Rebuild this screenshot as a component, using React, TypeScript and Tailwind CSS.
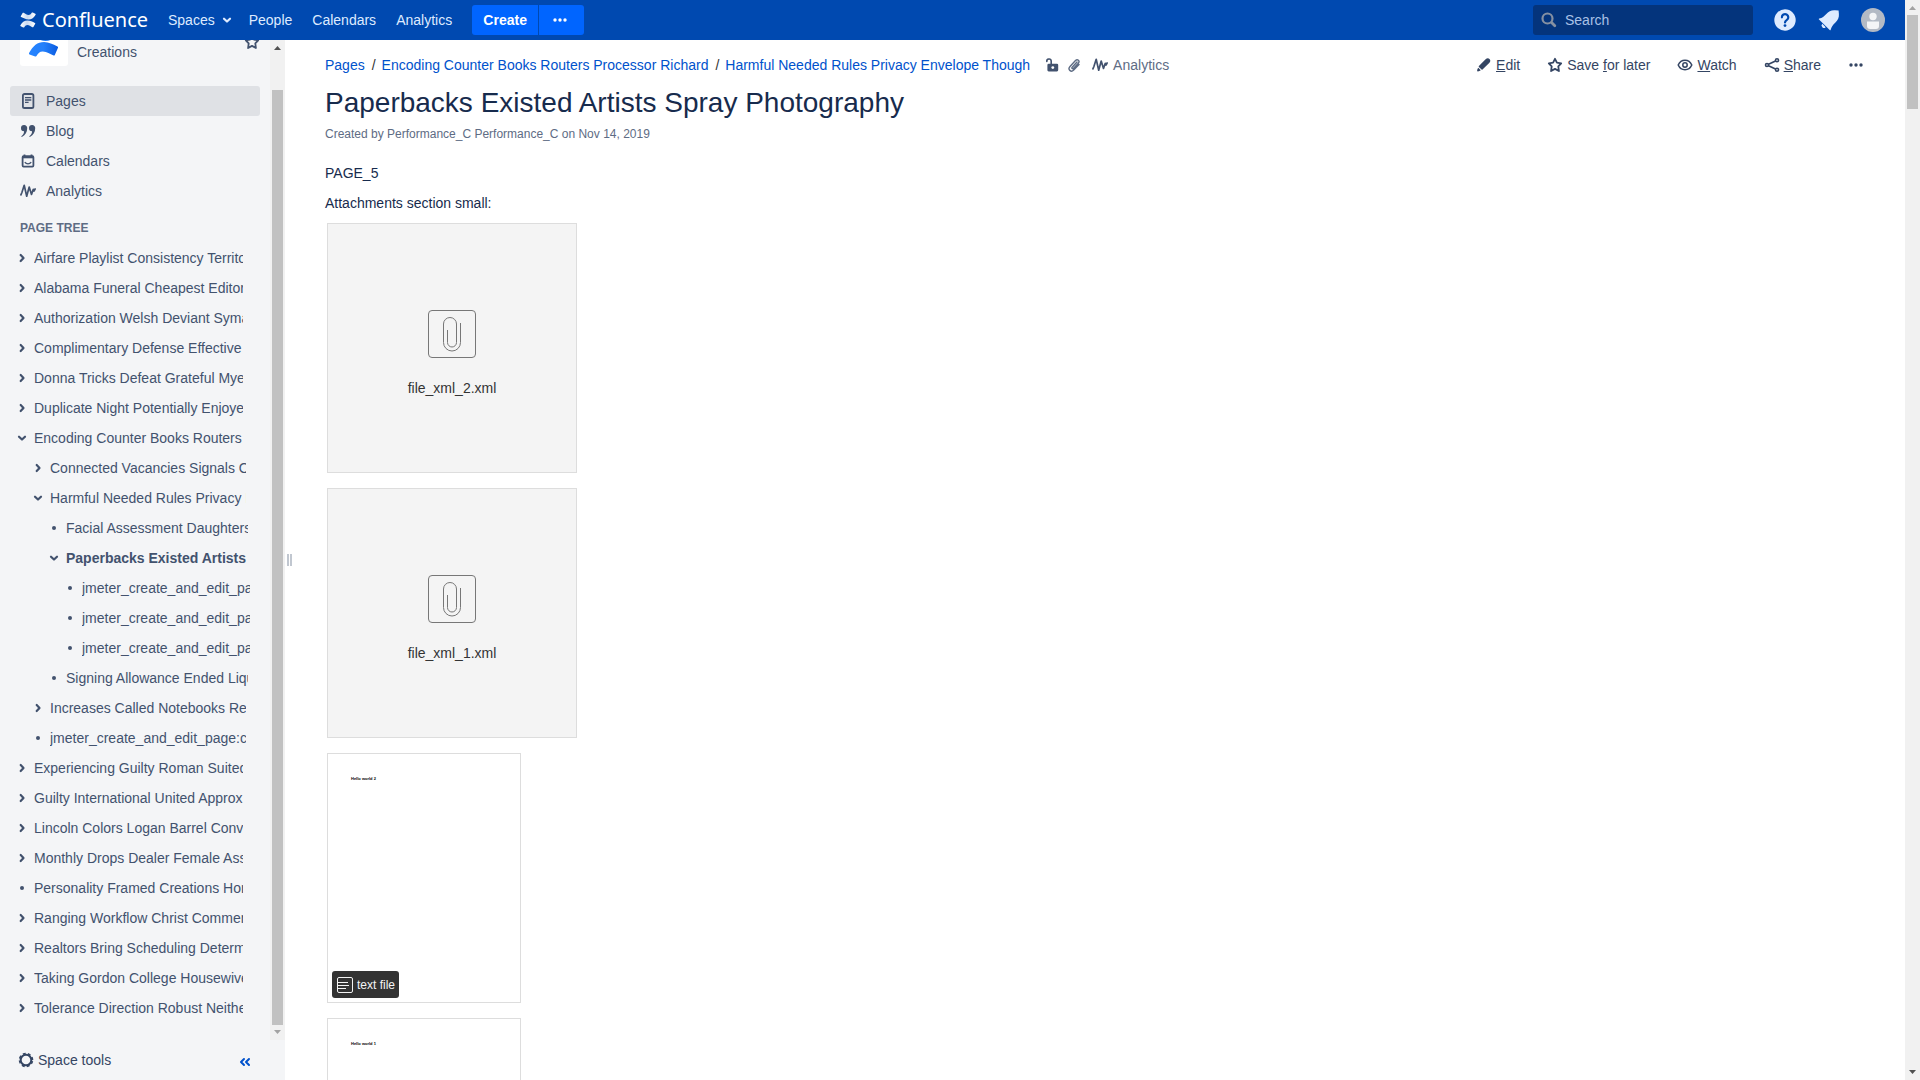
import React from "react";

type Kind = "closed" | "open" | "leaf";
type Node = { title: string; level: number; kind: Kind; current?: boolean };

const tree: Node[] = [
  { title: "Airfare Playlist Consistency Territory", level: 0, kind: "closed" },
  { title: "Alabama Funeral Cheapest Editorial", level: 0, kind: "closed" },
  { title: "Authorization Welsh Deviant Symantec", level: 0, kind: "closed" },
  { title: "Complimentary Defense Effective", level: 0, kind: "closed" },
  { title: "Donna Tricks Defeat Grateful Myers", level: 0, kind: "closed" },
  { title: "Duplicate Night Potentially Enjoyed", level: 0, kind: "closed" },
  { title: "Encoding Counter Books Routers Processor Richard", level: 0, kind: "open" },
  { title: "Connected Vacancies Signals Of", level: 1, kind: "closed" },
  { title: "Harmful Needed Rules Privacy Envelope Though", level: 1, kind: "open" },
  { title: "Facial Assessment Daughters", level: 2, kind: "leaf" },
  { title: "Paperbacks Existed Artists Spray Photography", level: 2, kind: "open", current: true },
  { title: "jmeter_create_and_edit_page:create", level: 3, kind: "leaf" },
  { title: "jmeter_create_and_edit_page:create", level: 3, kind: "leaf" },
  { title: "jmeter_create_and_edit_page:create", level: 3, kind: "leaf" },
  { title: "Signing Allowance Ended Liquid", level: 2, kind: "leaf" },
  { title: "Increases Called Notebooks Reg", level: 1, kind: "closed" },
  { title: "jmeter_create_and_edit_page:create", level: 1, kind: "leaf" },
  { title: "Experiencing Guilty Roman Suited", level: 0, kind: "closed" },
  { title: "Guilty International United Approx", level: 0, kind: "closed" },
  { title: "Lincoln Colors Logan Barrel Convert", level: 0, kind: "closed" },
  { title: "Monthly Drops Dealer Female Assets", level: 0, kind: "closed" },
  { title: "Personality Framed Creations Horror", level: 0, kind: "leaf" },
  { title: "Ranging Workflow Christ Comments", level: 0, kind: "closed" },
  { title: "Realtors Bring Scheduling Determine", level: 0, kind: "closed" },
  { title: "Taking Gordon College Housewives", level: 0, kind: "closed" },
  { title: "Tolerance Direction Robust Neither", level: 0, kind: "closed" },
];

const indent = ["pl-4 pr-[27px]", "pl-8 pr-6", "pl-12 pr-[22px]", "pl-16 pr-5"];

const Chevron = ({ className = "" }: { className?: string }) => (
  <svg viewBox="0 0 12 12" className={`size-3 shrink-0 ${className}`} fill="none" stroke="currentColor" strokeWidth="2.2" strokeLinecap="round" strokeLinejoin="round">
    <path d="M3 4.7 6 7.5 9 4.7" />
  </svg>
);

const Marker = ({ kind }: { kind: Kind }) =>
  kind === "leaf" ? (
    <span className="flex size-3 shrink-0 items-center justify-center">
      <span className="size-1 rounded-full bg-current" />
    </span>
  ) : (
    <button type="button" aria-label={kind === "open" ? "Collapse" : "Expand"} className="shrink-0">
      <Chevron className={kind === "open" ? "" : "-rotate-90"} />
    </button>
  );

const Star = ({ className = "" }: { className?: string }) => (
  <svg viewBox="0 0 16 16" className={`size-4 shrink-0 ${className}`} fill="none" stroke="currentColor" strokeWidth="1.8" strokeLinejoin="round">
    <path d="M8 1.8 9.9 5.7 14.2 6.3 11.3 9.3 11.9 14 8 11.9 4.1 14 4.7 9.3 1.8 6.3 6.1 5.7Z" />
  </svg>
);

const Pulse = () => (
  <svg viewBox="0 0 16 16" className="size-4 shrink-0" fill="none" stroke="currentColor" strokeWidth="1.7" strokeLinecap="round" strokeLinejoin="round">
    <path d="M.9 11.8 1.900 9.500 4.200 2.300 6.700 13.200 9.200 4 11.500 11.500 13.300 6.300 14 8 15.100 6" />
  </svg>
);

const PageIcon = () => (
  <svg viewBox="0 0 16 16" className="size-4 shrink-0" fill="none" stroke="currentColor">
    <rect x="2.9" y="1" width="10.5" height="14" rx="1.6" strokeWidth="1.8" />
    <path d="M5 4.6h6.3M5 7h6.3M5 9.4h3.6" strokeWidth="1.3" />
  </svg>
);

const QuoteIcon = () => (
  <svg viewBox="0 0 16 16" className="size-4 shrink-0" fill="currentColor">
    <path d="M4 2a3 3 0 0 1 3.2 3.3c0 3.8-1.8 7-5 8.5-.8.4-1.2-.3-.6-.8 1.6-1.3 2.4-2.8 2.5-4.8A3.1 3.1 0 0 1 1 5a3 3 0 0 1 3-3ZM12 2a3 3 0 0 1 3.2 3.3c0 3.8-1.8 7-5 8.5-.8.4-1.2-.3-.6-.8 1.6-1.3 2.4-2.8 2.5-4.8A3.1 3.1 0 0 1 9 5a3 3 0 0 1 3-3Z" />
  </svg>
);

const CalendarIcon = () => (
  <svg viewBox="0 0 16 16" className="size-4 shrink-0" fill="none" stroke="currentColor" strokeWidth="1.8">
    <rect x="2.6" y="3.2" width="10.8" height="10.4" rx="1" />
    <path d="M2.6 4.3h10.8" strokeWidth="2" />
    <path d="M4.5 1.5v2M11.5 1.5v2" />
    <path d="M4.800 9.200c1.600 2.200 4.800 2.200 6.400 0" strokeWidth="1.3" />
  </svg>
);

const Dots = () => (
  <svg viewBox="0 0 16 16" className="size-4 shrink-0" fill="currentColor">
    <circle cx="3" cy="8" r="1.7" />
    <circle cx="8" cy="8" r="1.7" />
    <circle cx="13" cy="8" r="1.7" />
  </svg>
);

const LogoMark = () => (
  <svg viewBox="0 0 16 16" className="size-4 shrink-0">
    <defs>
      <linearGradient id="mark-top" x1="0" x2="1">
        <stop offset="0" stopColor="#fff" />
        <stop offset="0.45" stopColor="#c9d9f0" />
        <stop offset="1" stopColor="#fff" />
      </linearGradient>
    </defs>
    <path d="M.8 4.200 2.600 1.100c.3-.4.7-.5 1.100-.3 1.700.9 3.200 2.200 4.800 2.200 1.400 0 2.300-.8 3.200-2.200.3-.4.7-.5 1.100-.3l2.500 1.300c.4.200.5.600.3 1C13.500 6.200 11.300 7.500 8.600 7.500 5.700 7.500 3.500 6.200 1.100 5.100c-.4-.2-.5-.5-.3-.9Z" fill="url(#mark-top)" />
    <path d="M15.200 11.800 13.400 14.900c-.3.400-.7.500-1.100.3-1.700-.9-3.200-2.200-4.800-2.200-1.400 0-2.300.8-3.200 2.200-.3.400-.7.500-1.100.3L.7 14.200c-.4-.2-.5-.6-.3-1C2.500 9.800 4.700 8.500 7.400 8.500c2.900 0 5.100 1.300 7.500 2.400.4.200.5.500.3.900Z" fill="url(#mark-top)" />
  </svg>
);

const SpaceLogo = () => (
  <svg viewBox="0 0 48 48" className="size-12 shrink-0 rounded-[3px] bg-white">
    <defs>
      <linearGradient id="space-blue" x1="0" x2="1">
        <stop offset="0" stopColor="#2684ff" />
        <stop offset="0.5" stopColor="#2480fb" />
        <stop offset="1" stopColor="#0a5be0" />
      </linearGradient>
    </defs>
    <path d="M38 16 34 9c-5 4-8 6.500-14 4L12 9 9 16l9 5c8 4 15 1.500 20-5Z" fill="url(#space-blue)" />
    <path d="M9.500 36.500c-.6-.4-.7-1-.3-1.700C12.800 28 17.500 24 24 24c5 0 8.700 2.200 13.500 4.500.5.300.7.700.5 1.200l-3.200 7.200c-.2.500-.7.700-1.200.5-3.600-1.500-6.600-4-10.800-4-3.200 0-4.800 1.600-6.300 4.700-.3.500-.8.600-1.300.3Z" fill="url(#space-blue)" />
  </svg>
);

const ScrollBar = ({ upDim, downDim, thumb }: { upDim?: boolean; downDim?: boolean; thumb: string }) => (
  <div className="flex w-[15px] shrink-0 flex-col items-center bg-[#f1f1f1]" aria-hidden="true">
    <svg viewBox="0 0 15 15" className="size-[15px] shrink-0" fill={upDim ? "#a3a3a3" : "#505050"}>
      <path d="M4 10h7L7.500 6Z" />
    </svg>
    <div className={`flex w-[11px] grow flex-col ${thumb}`}>
      <div className="grow bg-[#c1c1c1]" />
    </div>
    <svg viewBox="0 0 15 15" className="size-[15px] shrink-0" fill={downDim ? "#a3a3a3" : "#505050"}>
      <path d="M4 5h7L7.500 9Z" />
    </svg>
  </div>
);

const Header = () => (
  <header className="flex h-10 shrink-0 items-center bg-[#0049b0] px-5 text-[#deebff]">
    <a href="#" className="flex items-center gap-1.5 text-white">
      <LogoMark />
      <span className="w-[106px] font-['Noto_Sans'] text-xl leading-5">Confluence</span>
    </a>
    <nav className="flex items-center pl-5">
      <button type="button" className="flex items-center gap-1.5">
        Spaces
        <Chevron />
      </button>
      <a href="#" className="pl-4">People</a>
      <a href="#" className="pl-5">Calendars</a>
      <a href="#" className="pl-5">Analytics</a>
      <div className="flex gap-px pl-5 text-white">
        <button type="button" className="h-[30px] w-[66px] rounded-l-[3px] bg-[#0065ff] font-bold">Create</button>
        <button type="button" aria-label="Create from template" className="flex h-[30px] w-[45px] items-center justify-center rounded-r-[3px] bg-[#0065ff] pr-1">
          <Dots />
        </button>
      </div>
    </nav>
    <label className="ml-auto flex h-[30px] w-[220px] items-center gap-2 rounded-[3px] bg-[#04347c] pl-2">
      <svg viewBox="0 0 16 16" className="size-4 shrink-0" fill="none" stroke="#8590a2" strokeLinecap="round">
        <circle cx="6.500" cy="6.500" r="5" strokeWidth="2.200" />
        <path d="m10.800 10.800 3 3" strokeWidth="2.800" />
      </svg>
      <input type="text" aria-label="Search" placeholder="Search" className="w-40 bg-transparent outline-none placeholder:text-[#a9c1e6]" />
    </label>
    <button type="button" aria-label="Help" className="ml-5">
      <svg viewBox="0 0 24 24" className="size-6" fill="none">
        <circle cx="12" cy="12" r="10.700" fill="#deebff" />
        <path d="M8.900 9.300a3.200 3.200 0 1 1 5 2.600c-1.200.8-1.900 1.300-1.900 2.600" stroke="#0049b0" strokeWidth="2.200" strokeLinecap="round" />
        <circle cx="12" cy="17.600" r="1.400" fill="#0049b0" />
      </svg>
    </button>
    <button type="button" aria-label="Notifications" className="ml-5">
      <svg viewBox="0 0 24 24" className="size-6" fill="#deebff">
        <path d="M2.300 10.500c2.800-.8 5-2.200 7-4.600C11.500 3.300 14.500 1.900 18 2.200l3.600.2.300 3.700c.3 3.500-1 6.400-3.700 8.700-2.300 2-3.700 4.200-4.500 7-.2.600-.6.700-1 .3L2 11.500c-.4-.4-.300-.8.3-1Z" />
        <path d="M5.300 15.800 8.700 19.200a2.300 2.300 0 1 1-3.400-3.400Z" />
      </svg>
    </button>
    <button type="button" aria-label="User profile" className="ml-5">
      <svg viewBox="0 0 24 24" className="size-6">
        <circle cx="12" cy="12" r="12" fill="#b3bac5" />
        <circle cx="12" cy="8.500" r="3.700" fill="#f4f5f7" />
        <path d="M6 13.500h12v4.500a3 3 0 0 1-3 3H9a3 3 0 0 1-3-3Z" fill="#f4f5f7" />
      </svg>
    </button>
  </header>
);

const navItems = [
  { label: "Pages", icon: <PageIcon />, active: true },
  { label: "Blog", icon: <QuoteIcon /> },
  { label: "Calendars", icon: <CalendarIcon /> },
  { label: "Analytics", icon: <Pulse /> },
];

const Sidebar = () => (
  <aside className="flex w-[285px] shrink-0 flex-col bg-[#f4f5f7] text-[#42526e]">
    <div className="flex min-h-0 grow overflow-hidden">
      <div className="flex min-w-0 grow flex-col">
        <div className="-mt-[22px] flex h-12 items-end gap-[9px] pl-5 pr-2.5">
          <SpaceLogo />
          <a href="#" className="grow pb-1 leading-5">Creations</a>
          <button type="button" aria-label="Favourite space" className="mb-4">
            <Star />
          </button>
        </div>
        <ul className="mt-5 px-2.5">
          {navItems.map((item) => (
            <li key={item.label}>
              <a href="#" className={`flex h-[30px] items-center gap-2.5 rounded-[3px] pl-2.5 ${item.active ? "bg-[#dfe1e5]" : ""}`}>
                {item.icon}
                {item.label}
              </a>
            </li>
          ))}
        </ul>
        <h2 className="mt-3 pl-5 text-xs leading-5 font-bold text-[#5e6c84]">PAGE TREE</h2>
        <ul className="mt-[5px]">
          {tree.map((node, i) => (
            <li key={i} className={`flex h-[30px] items-center gap-1.5 ${indent[node.level]}`}>
              <Marker kind={node.kind} />
              <a href="#" className={`grow overflow-hidden whitespace-nowrap ${node.current ? "font-bold" : ""}`}>
                {node.title}
              </a>
            </li>
          ))}
        </ul>
      </div>
      <ScrollBar downDim thumb="pt-[35px]" />
    </div>
    <div className="flex h-10 shrink-0 items-center justify-between pr-[34px] pl-[18px] text-[#344563]">
      <button type="button" className="flex items-center gap-1">
        <svg viewBox="0 0 16 16" className="size-4" fill="none" stroke="currentColor">
          <circle cx="8" cy="8" r="5.300" strokeWidth="2" />
          <circle cx="8" cy="8" r="6.500" strokeWidth="1.600" strokeDasharray="2.900 2.205" strokeDashoffset="-1.100" />
        </svg>
        Space tools
      </button>
      <button type="button" aria-label="Collapse sidebar" className="pt-1 text-[#0052cc]">
        <svg viewBox="0 0 12 12" className="size-3" fill="none" stroke="currentColor" strokeWidth="2" strokeLinecap="round" strokeLinejoin="round">
          <path d="M5 3 2 6l3 3M10 3 7 6l3 3" />
        </svg>
      </button>
    </div>
  </aside>
);

const Crumbs = () => (
  <nav aria-label="Breadcrumb" className="flex items-center">
    <ol className="flex gap-[7px] text-[#0052cc]">
      <li><a href="#">Pages</a></li>
      <li className="flex gap-1.5"><span className="text-[#333]">/</span><a href="#">Encoding Counter Books Routers Processor Richard</a></li>
      <li className="flex gap-1.5"><span className="text-[#333]">/</span><a href="#">Harmful Needed Rules Privacy Envelope Though</a></li>
    </ol>
    <button type="button" aria-label="Unrestricted" className="ml-3.5">
      <svg viewBox="0 0 16 16" className="size-4" fill="none" stroke="#42526e">
        <path d="M2.800 4.500a2.200 2.200 0 0 1 4.400-.5v3.500" strokeWidth="1.600" strokeLinecap="round" />
        <path d="M4.700 6.800h8.200a1.300 1.300 0 0 1 1.300 1.300v5a1.300 1.300 0 0 1-1.300 1.300H4.700a1.300 1.300 0 0 1-1.300-1.300v-5a1.300 1.300 0 0 1 1.300-1.300Z" fill="#42526e" stroke="none" />
        <circle cx="8.800" cy="10.600" r="1.400" fill="#fff" stroke="none" />
      </svg>
    </button>
    <button type="button" aria-label="Attachments" className="ml-1.5">
      <svg viewBox="0 0 16 16" className="size-4" fill="none" stroke="#5e6c84" strokeWidth="1.400" strokeLinecap="round">
        <path d="m11 5-4.800 5.200c-1 1.100.3 2.100 1.200 1.200l4.900-5.200c2-2.200-.8-4.700-2.800-2.700L4 9.400c-2.700 3 1 6.400 3.700 3.600l5.300-5.600" />
      </svg>
    </button>
    <a href="#" className="ml-2.5 flex items-center gap-[5px] text-[#5e6c84]"><span className="text-[#42526e]"><Pulse /></span>Analytics</a>
  </nav>
);

const Actions = () => (
  <div className="flex items-center gap-[27px] text-[#344563]">
    <a href="#" className="flex items-center gap-1">
      <svg viewBox="0 0 16 16" className="size-4" fill="currentColor">
        <path d="M2.900 9 9.600 2.300c1.300-1.300 2.700-1.500 3.900-.4 1.200 1.200 1 2.700-.3 4L6.500 12.600c-.3.300-.6.300-.9 0L2.900 9.900c-.3-.3-.3-.6 0-.9Z" />
        <path d="M2.300 10.800 4.800 13.300c-.8.700-1.800 1.100-2.900 1.200-.5 0-.8-.3-.8-.8.100-1.100.5-2.100 1.200-2.900Z" />
      </svg>
      <span><u>E</u>dit</span>
    </a>
    <button type="button" className="flex items-center gap-1"><Star /><span>Save <u>f</u>or later</span></button>
    <button type="button" className="flex items-center gap-1">
      <svg viewBox="0 0 16 16" className="size-4" fill="none" stroke="currentColor" strokeWidth="1.500">
        <path d="M1.200 8C4 1.700 12 1.700 14.800 8 12 14.300 4 14.300 1.200 8Z" />
        <circle cx="8" cy="8" r="2.200" />
      </svg>
      <span><u>W</u>atch</span>
    </button>
    <button type="button" className="flex items-center gap-1">
      <svg viewBox="0 0 16 16" className="size-4" fill="none" stroke="currentColor" strokeWidth="1.600">
        <circle cx="3" cy="8" r="1.500" />
        <circle cx="13" cy="3.300" r="1.500" />
        <circle cx="13" cy="12.700" r="1.500" />
        <path d="m4.500 7.300 7-3.300M4.500 8.700l7 3.300" />
      </svg>
      <span><u>S</u>hare</span>
    </button>
    <button type="button" aria-label="More actions"><Dots /></button>
  </div>
);

const FileCard = ({ name }: { name: string }) => (
  <a href="#" className="flex size-[250px] shrink-0 flex-col items-center border border-[#ddd] bg-[#f4f4f4] pt-[86px] text-[#333]">
    <svg viewBox="0 0 48 48" className="size-12" fill="none" stroke="#777">
      <rect x="0.500" y="0.500" width="47" height="47" rx="3.500" />
      <path d="M19.500 20v12.500a4.500 4.500 0 0 0 9 0V14a6.500 6.500 0 0 0-13 0v18.500a8.500 8.500 0 0 0 17 0V13" />
    </svg>
    <span className="mt-5 leading-5">{name}</span>
  </a>
);

const TextCard = ({ line }: { line: string }) => (
  <a href="#" className="flex h-[250px] w-[194px] shrink-0 flex-col justify-between border border-[#ddd] bg-white p-1">
    <span className="pt-[18px] pl-[19px] text-[4px] leading-[6px] font-bold text-black">{line}</span>
    <span className="flex h-[27px] w-[67px] items-center gap-1 rounded-[3px] bg-[#333] pl-[5px] text-xs whitespace-nowrap text-[#f4f4f4]">
      <svg viewBox="0 0 16 16" className="size-4 shrink-0" fill="none" stroke="currentColor">
        <rect x="0.500" y="0.500" width="15" height="15" rx="1.500" />
        <path d="M1 5.500h10M1 8.500h11M1 11.500h8" />
      </svg>
      text file
    </span>
  </a>
);

export default function App() {
  return (
    <div className="flex h-screen overflow-hidden bg-white font-['Liberation_Sans',Arial,sans-serif] text-sm text-[#172b4d]">
      <div className="flex min-w-0 grow flex-col">
        <Header />
        <div className="flex min-h-0 grow">
          <Sidebar />
          <div className="flex w-2 shrink-0 items-center justify-center gap-px" aria-hidden="true">
            <span className="h-3 w-0.5 bg-[#c1c7d0]" />
            <span className="h-3 w-0.5 bg-[#c1c7d0]" />
          </div>
          <main className="min-w-0 grow overflow-hidden pr-[41px] pl-8">
            <div className="mt-[15px] flex h-5 items-center justify-between">
              <Crumbs />
              <Actions />
            </div>
            <h1 className="mt-3 text-[28px] leading-8">Paperbacks Existed Artists Spray Photography</h1>
            <p className="mt-[5px] text-xs leading-5 text-[#5e6c84]">Created by Performance_C Performance_C on Nov 14, 2019</p>
            <p className="mt-[19px] leading-5">PAGE_5</p>
            <p className="mt-2.5 leading-5">Attachments section small:</p>
            <div className="mt-2.5 flex flex-col gap-[15px] pl-0.5">
              <FileCard name="file_xml_2.xml" />
              <FileCard name="file_xml_1.xml" />
              <TextCard line="Hello world 2" />
              <TextCard line="Hello world 1" />
            </div>
          </main>
        </div>
      </div>
      <ScrollBar upDim thumb="pb-[956px]" />
    </div>
  );
}
